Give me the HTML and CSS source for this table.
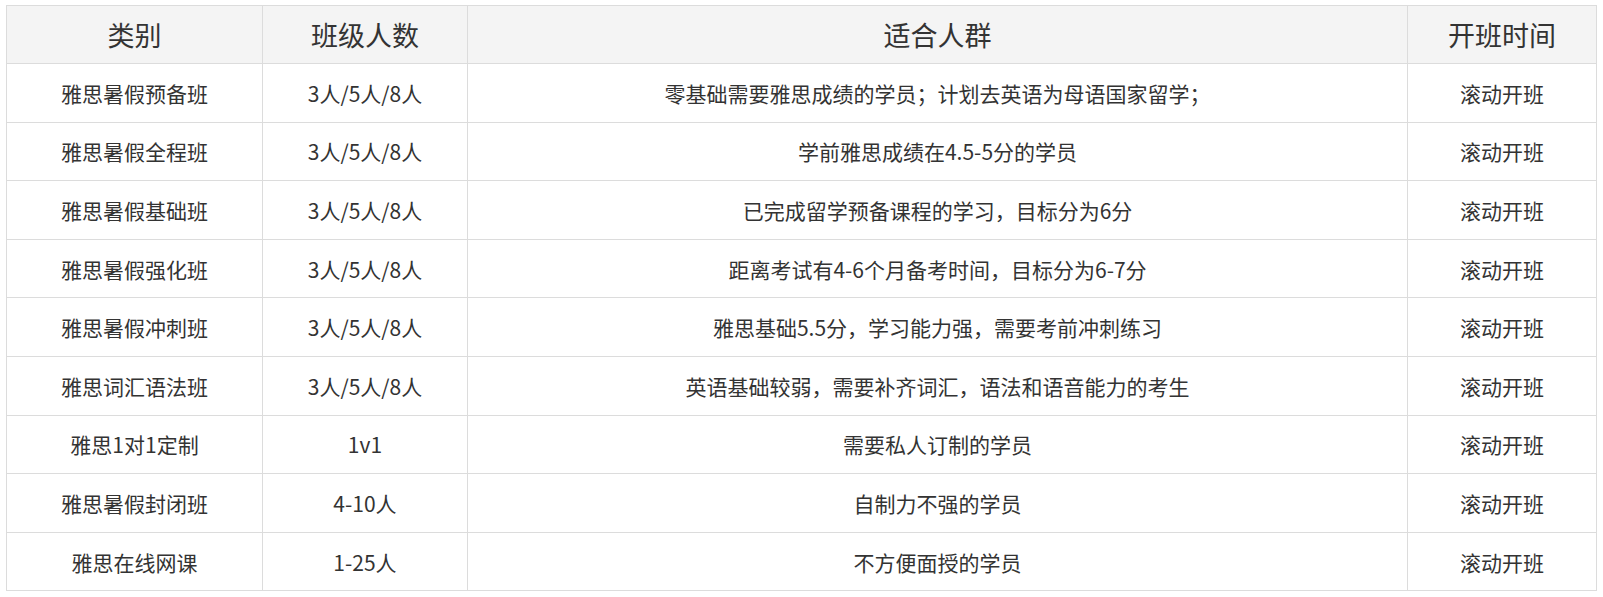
FILE: index.html
```html
<!DOCTYPE html>
<html lang="zh-CN">
<head>
<meta charset="utf-8">
<title>雅思课程</title>
<link rel="stylesheet" href="styles.css">
</head>
<body>
<div class="wrap">
<table class="course-table">
  <colgroup>
    <col class="c1"><col class="c2"><col class="c3"><col class="c4">
  </colgroup>
  <thead>
    <tr><th>类别</th><th>班级人数</th><th>适合人群</th><th>开班时间</th></tr>
  </thead>
  <tbody>
    <tr><td>雅思暑假预备班</td><td>3人/5人/8人</td><td>零基础需要雅思成绩的学员；计划去英语为母语国家留学；</td><td>滚动开班</td></tr>
    <tr><td>雅思暑假全程班</td><td>3人/5人/8人</td><td>学前雅思成绩在4.5-5分的学员</td><td>滚动开班</td></tr>
    <tr><td>雅思暑假基础班</td><td>3人/5人/8人</td><td>已完成留学预备课程的学习，目标分为6分</td><td>滚动开班</td></tr>
    <tr><td>雅思暑假强化班</td><td>3人/5人/8人</td><td>距离考试有4-6个月备考时间，目标分为6-7分</td><td>滚动开班</td></tr>
    <tr><td>雅思暑假冲刺班</td><td>3人/5人/8人</td><td>雅思基础5.5分，学习能力强，需要考前冲刺练习</td><td>滚动开班</td></tr>
    <tr><td>雅思词汇语法班</td><td>3人/5人/8人</td><td>英语基础较弱，需要补齐词汇，语法和语音能力的考生</td><td>滚动开班</td></tr>
    <tr><td>雅思1对1定制</td><td>1v1</td><td>需要私人订制的学员</td><td>滚动开班</td></tr>
    <tr><td>雅思暑假封闭班</td><td>4-10人</td><td>自制力不强的学员</td><td>滚动开班</td></tr>
    <tr><td>雅思在线网课</td><td>1-25人</td><td>不方便面授的学员</td><td>滚动开班</td></tr>
  </tbody>
</table>
</div>
</body>
</html>
```
FILE: styles.css
```css
html, body {
  margin: 0;
  padding: 0;
  background: #fff;
}
.wrap {
  padding: 5px 7px 0 6px;
}
.course-table {
  width: 1590px;
  border-collapse: collapse;
  table-layout: fixed;
  font-family: "Noto Sans CJK SC", "Microsoft YaHei", sans-serif;
  color: #333;
}
.c1 { width: 256px; }
.c2 { width: 205px; }
.c3 { width: 940px; }
.c4 { width: 189px; }
.course-table th,
.course-table td {
  border: 1px solid #dcdcdc;
  text-align: center;
  vertical-align: middle;
  padding: 0;
}
.course-table th {
  background: #f4f4f4;
  font-size: 27px;
  font-weight: normal;
  height: 57px;
  color: #333;
}
.course-table td {
  font-size: 21px;
  height: 57.6px;
}
```
